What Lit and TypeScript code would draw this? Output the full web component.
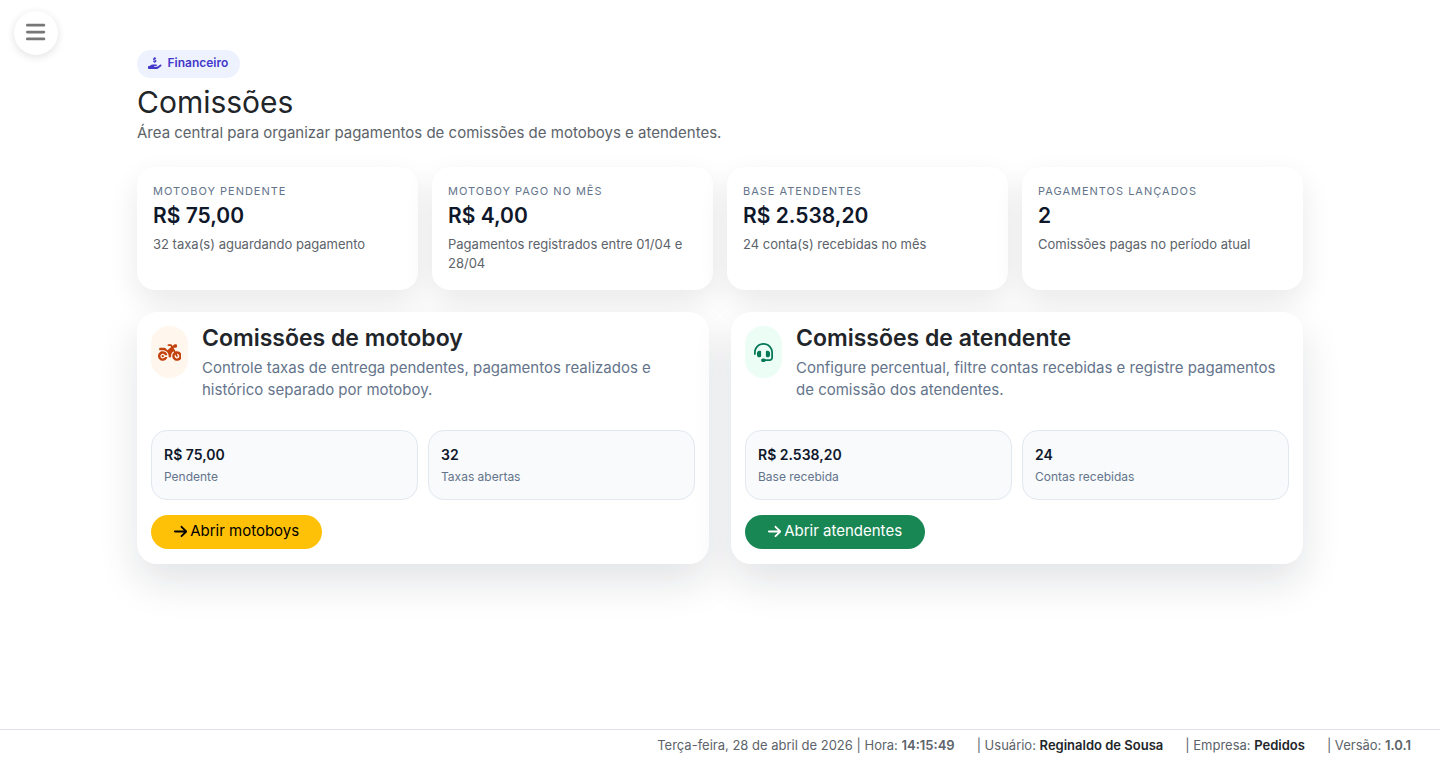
import { LitElement, html, css, svg } from "lit";
import { customElement, property } from "lit/decorators.js";

const ICONS: Record<string, { w: number; d: string }> = {
  bars: {
    w: 448,
    d: "M0 96C0 78.3 14.3 64 32 64l384 0c17.7 0 32 14.3 32 32s-14.3 32-32 32L32 128C14.3 128 0 113.7 0 96zM0 256c0-17.7 14.3-32 32-32l384 0c17.7 0 32 14.3 32 32s-14.3 32-32 32L32 288c-17.7 0-32-14.3-32-32zM448 416c0 17.7-14.3 32-32 32L32 448c-17.7 0-32-14.3-32-32s14.3-32 32-32l384 0c17.7 0 32 14.3 32 32z",
  },
  arrow: {
    w: 448,
    d: "M438.6 278.6c12.5-12.5 12.5-32.8 0-45.3l-160-160c-12.5-12.5-32.8-12.5-45.3 0s-12.5 32.8 0 45.3L338.8 224 32 224c-17.7 0-32 14.3-32 32s14.3 32 32 32l306.7 0L233.4 393.4c-12.5 12.5-12.5 32.8 0 45.3s32.8 12.5 45.3 0l160-160z",
  },
  money: {
    w: 576,
    d: "M312 24l0 10.5c6.4 1.2 12.6 2.7 18.2 4.2c12.8 3.4 20.4 16.6 17 29.4s-16.6 20.4-29.4 17c-10.9-2.9-21.1-4.9-30.2-5c-7.3-.1-14.7 1.7-19.4 4.4c-2.1 1.3-3.1 2.4-3.5 3c-.3 .5-.7 1.2-.7 2.8c0 .3 0 .5 0 .6c.2 .2 .9 1.2 3.3 2.6c5.8 3.5 14.4 6.2 27.4 10.1l.9 .3s0 0 0 0c11.1 3.3 25.9 7.8 37.9 15.3c13.7 8.6 26.1 22.9 26.4 44.9c.3 22.5-11.4 38.9-26.7 48.5c-6.7 4.1-13.9 7-21.3 8.8l0 10.6c0 13.3-10.7 24-24 24s-24-10.7-24-24l0-11.4c-9.5-2.3-18.2-5.3-25.6-7.8c-2.1-.7-4.1-1.4-6-2c-12.6-4.2-19.4-17.8-15.2-30.4s17.8-19.4 30.4-15.2c2.6 .9 5 1.7 7.3 2.5c13.6 4.6 23.4 7.9 33.9 8.3c8 .3 15.1-1.6 19.2-4.1c1.9-1.2 2.8-2.2 3.2-2.9c.4-.6 .9-1.8 .8-4.1l0-.2c0-1 0-2.1-4-4.6c-5.7-3.6-14.3-6.4-27.1-10.3l-1.9-.6c-10.8-3.2-25-7.5-36.4-14.4c-13.5-8.1-26.5-22-26.6-44.1c-.1-22.9 12.9-38.6 27.7-47.4c6.4-3.8 13.3-6.4 20.2-8.2L264 24c0-13.3 10.7-24 24-24s24 10.7 24 24zM568.2 336.3c13.1 17.8 9.3 42.8-8.5 55.9L433.1 485.5c-23.4 17.2-51.6 26.5-80.7 26.5L192 512 32 512c-17.7 0-32-14.3-32-32l0-64c0-17.7 14.3-32 32-32l36.8 0 44.9-36c22.7-18.2 50.9-28 80-28l78.3 0 16 0 64 0c17.7 0 32 14.3 32 32s-14.3 32-32 32l-64 0-16 0c-8.8 0-16 7.2-16 16s7.2 16 16 16l120.6 0 119.7-88.2c17.8-13.1 42.8-9.3 55.9 8.5z",
  },
  headset: {
    w: 512,
    d: "M256 48C141.1 48 48 141.1 48 256l0 40c0 13.3-10.7 24-24 24s-24-10.7-24-24l0-40C0 114.6 114.6 0 256 0S512 114.6 512 256l0 144.1c0 48.6-39.4 88-88.1 88L313.6 488c-8.3 14.3-23.8 24-41.6 24l-32 0c-26.5 0-48-21.5-48-48s21.5-48 48-48l32 0c17.8 0 33.3 9.7 41.6 24l110.4 .1c22.1 0 40-17.9 40-40L464 256c0-114.9-93.1-208-208-208zM144 208l16 0c17.7 0 32 14.3 32 32l0 112c0 17.7-14.3 32-32 32l-16 0c-35.3 0-64-28.7-64-64l0-48c0-35.3 28.7-64 64-64zm224 0c35.3 0 64 28.7 64 64l0 48c0 35.3-28.7 64-64 64l-16 0c-17.7 0-32-14.3-32-32l0-112c0-17.7 14.3-32 32-32l16 0z",
  },
  motorcycle: {
    w: 640,
    d: "M280 32c-13.3 0-24 10.7-24 24s10.7 24 24 24l57.7 0 16.4 30.3L256 192l-45.3-45.3c-12-12-28.3-18.7-45.3-18.7L64 128c-17.7 0-32 14.3-32 32l0 32 96 0c88.4 0 160 71.6 160 160c0 11-1.1 21.7-3.2 32l70.4 0c-2.1-10.3-3.2-21-3.2-32c0-52.2 25-98.6 63.7-127.8l15.4 28.6C402.4 276.3 384 312 384 352c0 70.7 57.3 128 128 128s128-57.3 128-128s-57.3-128-128-128c-13.5 0-26.5 2.1-38.7 6L418.2 128l61.8 0c17.7 0 32-14.3 32-32l0-32c0-17.7-14.3-32-32-32l-20.4 0c-7.5 0-14.7 2.6-20.5 7.4L391.7 78.9l-14-26c-7-12.9-20.5-21-35.2-21L280 32zM462.7 311.2l28.2 52.2c6.3 11.7 20.9 16 32.5 9.7s16-20.9 9.7-32.5l-28.2-52.2c2.3-.3 4.7-.4 7.1-.4c35.3 0 64 28.7 64 64s-28.7 64-64 64s-64-28.7-64-64c0-15.5 5.5-29.7 14.7-40.8zM187.3 376c-9.5 23.5-32.5 40-59.3 40c-35.3 0-64-28.7-64-64s28.7-64 64-64c26.9 0 49.9 16.5 59.3 40l66.4 0C242.5 268.8 190.5 224 128 224C57.3 224 0 281.3 0 352s57.3 128 128 128c62.5 0 114.5-44.8 125.8-104l-66.4 0zM128 384a32 32 0 1 0 0-64 32 32 0 1 0 0 64z",
  },
};

const icon = (name: string) => {
  const { w, d } = ICONS[name];
  return html`<svg class="icon ${name}" viewBox="0 0 ${w} 512" aria-hidden="true">${svg`<path fill="currentColor" d=${d}></path>`}</svg>`;
};

@customElement("stat-card")
class StatCard extends LitElement {
  @property() label = "";
  @property() value = "";
  @property() note = "";

  static styles = css`
    :host {
      display: block;
      padding: 16px 16px 17px;
      border-radius: 18px;
      background: #fff;
      box-shadow: 0 12px 30px rgba(15, 15, 20, 0.09);
    }
    .label {
      color: #64748b;
      font-size: 11px;
      line-height: 16px;
      letter-spacing: 1px;
      text-transform: uppercase;
    }
    .value {
      margin-top: 2px;
      color: #0f172a;
      font-size: 21px;
      font-weight: 600;
      line-height: 30px;
    }
    .note {
      margin-top: 4px;
      color: #5c636a;
      font-size: 13px;
      line-height: 19px;
    }
  `;

  render() {
    return html`
      <div class="label">${this.label}</div>
      <div class="value">${this.value}</div>
      <div class="note">${this.note}</div>
    `;
  }
}

interface Figure {
  value: string;
  label: string;
}

@customElement("commission-panel")
class CommissionPanel extends LitElement {
  @property() kind = "";
  @property() heading = "";
  @property() text = "";
  @property() action = "";
  @property({ attribute: false }) figures: Figure[] = [];

  static styles = css`
    :host {
      display: block;
      padding: 14px 14px 15px;
      border-radius: 20px;
      background: #fff;
      box-shadow: 0 18px 40px rgba(15, 23, 42, 0.12);
    }
    .head {
      display: flex;
      align-items: flex-start;
      gap: 14px;
    }
    .badge {
      display: flex;
      flex: none;
      align-items: center;
      justify-content: center;
      width: 37px;
      height: 52px;
      border-radius: 18px;
    }
    .badge.motorcycle {
      background: #fff7ed;
      color: #c2410c;
    }
    .badge.headset {
      background: #ecfdf5;
      color: #047857;
    }
    .badge .icon {
      height: 19px;
    }
    h2 {
      margin: 0;
      color: #212529;
      font-size: 23px;
      font-weight: 600;
      line-height: 25px;
    }
    p {
      margin: 6px 0 0;
      color: #64748b;
      font-size: 15px;
      line-height: 22px;
    }
    .figures {
      display: grid;
      grid-template-columns: 1fr 1fr;
      gap: 10px;
      margin: 29px 0 15px;
    }
    .figure {
      padding: 13px 12px;
      border: 1px solid #e2e8f0;
      border-radius: 16px;
      background: #f8fafc;
    }
    .value {
      color: #0f172a;
      font-size: 14px;
      font-weight: 600;
      line-height: 22px;
    }
    .label {
      margin-top: 2px;
      color: #64748b;
      font-size: 12px;
      line-height: 18px;
    }
    .open {
      display: inline-flex;
      align-items: center;
      gap: 3px;
      padding: 5px 23px 7px;
      border-radius: 17px;
      font-size: 15px;
      line-height: 22px;
      text-decoration: none;
      vertical-align: top;
    }
    .open.motorcycle {
      background: #ffc107;
      color: #000;
    }
    .open.headset {
      background: #198754;
      color: #fff;
    }
    .open .icon {
      height: 15px;
    }
  `;

  render() {
    return html`
      <div class="head">
        <div class="badge ${this.kind}">${icon(this.kind)}</div>
        <div>
          <h2>${this.heading}</h2>
          <p>${this.text}</p>
        </div>
      </div>
      <div class="figures">
        ${this.figures.map(
          (f) => html`<div class="figure">
            <div class="value">${f.value}</div>
            <div class="label">${f.label}</div>
          </div>`,
        )}
      </div>
      <a class="open ${this.kind}" href="#${this.kind}">${icon("arrow")}<span>${this.action}</span></a>
    `;
  }
}

@customElement("app-root")
class AppRoot extends LitElement {
  static styles = css`
    :host {
      display: flex;
      flex-direction: column;
      min-height: 100vh;
      background: #fff;
      color: #212529;
      font-family: Inter, "Open Sans", sans-serif;
    }
    .menu {
      position: absolute;
      top: 11px;
      left: 14px;
      display: flex;
      align-items: center;
      justify-content: center;
      width: 44px;
      height: 44px;
      padding: 0 0 2px;
      border: 0;
      border-radius: 50%;
      background: #fff;
      color: #777;
      box-shadow: 0 2px 8px rgba(0, 0, 0, 0.12);
      cursor: pointer;
    }
    .menu .icon {
      height: 22px;
    }
    main {
      flex: 1;
      box-sizing: border-box;
      width: 100%;
      max-width: 1194px;
      margin: 0 auto;
      padding: 50px 14px 40px;
    }
    .tag {
      display: inline-flex;
      align-items: center;
      gap: 6px;
      padding: 4px 12px 6px 11px;
      border-radius: 14px;
      background: #eef2ff;
      color: #4338ca;
      font-size: 12px;
      font-weight: 600;
      line-height: 18px;
      vertical-align: top;
    }
    .tag .icon {
      height: 12px;
    }
    h1 {
      margin: 6px 0 0;
      font-size: 30px;
      font-weight: 400;
      line-height: 36px;
    }
    .lead {
      margin: 2px 0 0;
      color: #5c636a;
      font-size: 15px;
      line-height: 22px;
    }
    .stats {
      display: grid;
      grid-template-columns: repeat(4, 1fr);
      gap: 14px;
      margin-top: 23px;
    }
    .panels {
      display: grid;
      grid-template-columns: 1fr 1fr;
      gap: 22px;
      margin-top: 22px;
    }
    footer {
      display: flex;
      justify-content: flex-end;
      gap: 22px;
      padding: 6px 29px 5px;
      border-top: 1px solid #dee2e6;
      color: #5c636a;
      font-size: 13px;
      line-height: 19px;
    }
    strong {
      font-weight: 600;
    }
    .dark {
      color: #212529;
    }
  `;

  render() {
    return html`
      <button class="menu" type="button" aria-label="Menu">${icon("bars")}</button>
      <main>
        <div class="tag">${icon("money")}<span>Financeiro</span></div>
        <h1>Comissões</h1>
        <p class="lead">Área central para organizar pagamentos de comissões de motoboys e atendentes.</p>
        <section class="stats">
          <stat-card label="Motoboy pendente" value="R$ 75,00" note="32 taxa(s) aguardando pagamento"></stat-card>
          <stat-card label="Motoboy pago no mês" value="R$ 4,00" note="Pagamentos registrados entre 01/04 e 28/04"></stat-card>
          <stat-card label="Base atendentes" value="R$ 2.538,20" note="24 conta(s) recebidas no mês"></stat-card>
          <stat-card label="Pagamentos lançados" value="2" note="Comissões pagas no período atual"></stat-card>
        </section>
        <section class="panels">
          <commission-panel
            kind="motorcycle"
            heading="Comissões de motoboy"
            text="Controle taxas de entrega pendentes, pagamentos realizados e histórico separado por motoboy."
            action="Abrir motoboys"
            .figures=${[
              { value: "R$ 75,00", label: "Pendente" },
              { value: "32", label: "Taxas abertas" },
            ]}
          ></commission-panel>
          <commission-panel
            kind="headset"
            heading="Comissões de atendente"
            text="Configure percentual, filtre contas recebidas e registre pagamentos de comissão dos atendentes."
            action="Abrir atendentes"
            .figures=${[
              { value: "R$ 2.538,20", label: "Base recebida" },
              { value: "24", label: "Contas recebidas" },
            ]}
          ></commission-panel>
        </section>
      </main>
      <footer>
        <span>Terça-feira, 28 de abril de 2026 | Hora: <strong>14:15:49</strong></span>
        <span>| Usuário: <strong class="dark">Reginaldo de Sousa</strong></span>
        <span>| Empresa: <strong class="dark">Pedidos</strong></span>
        <span>| Versão: <strong>1.0.1</strong></span>
      </footer>
    `;
  }
}
